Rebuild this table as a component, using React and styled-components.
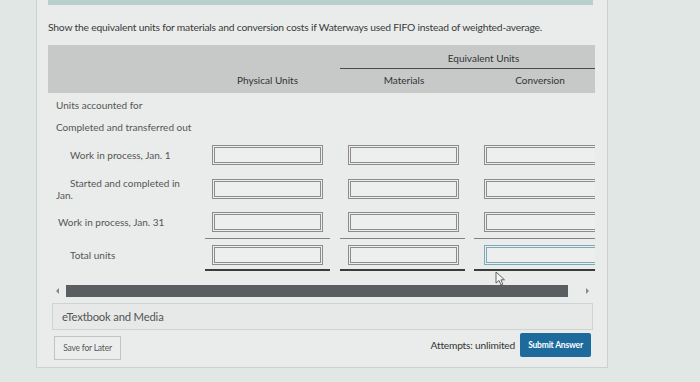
import React from "react";
import styled, { createGlobalStyle } from "styled-components";

const Global = createGlobalStyle`
  html, body { margin: 0; padding: 0; }
  body {
    background: #e1e7e4;
    font-family: Lato, "Open Sans", sans-serif;
    color: #444;
    width: 700px;
    height: 382px;
    overflow: hidden;
  }
`;

const Card = styled.div`
  margin-left: 36px;
  width: 572px;
  height: 368px;
  box-sizing: border-box;
  background: #e9ecea;
  border: 1px solid #cdd1cf;
  border-top: none;
  padding: 0 14px 0 11px;
  position: relative;
`;

const TopStrip = styled.div`
  height: 5px;
  background: #b9cfcb;
`;

const Prompt = styled.div`
  margin-top: 16px;
  font-size: 10.3px;
  color: #3a3a3a;
  letter-spacing: -0.2px;
  line-height: 12px;
`;

const Scroller = styled.div`
  margin-top: 12px;
  width: 547px;
  overflow: hidden;
`;

const Grid = styled.div`
  display: grid;
  grid-template-columns: 157px 135px 134px 140px;
  width: 566px;
`;

const HeadBand = styled.div`
  grid-column: 1 / -1;
  background: #c6c9c8;
  height: 48px;
  display: grid;
  grid-template-columns: 157px 135px 134px 140px;
  grid-template-rows: 24px 24px;
`;

const EqHead = styled.div`
  grid-column: 3 / 5;
  grid-row: 1;
  border-bottom: 1px solid #4a4a4a;
  margin-right: 19px;
  display: flex;
  align-items: center;
  justify-content: center;
  font-size: 10px;
  color: #333;
  padding-top: 3px;
  padding-left: 32px;
  box-sizing: border-box;
`;

const ColHead = styled.div`
  grid-column: ${(p) => p.col};
  grid-row: 2;
  display: flex;
  align-items: center;
  justify-content: center;
  font-size: 10px;
  color: #333;
  padding-right: ${(p) => p.pr || 0}px;
  padding-bottom: 2px;
`;

const Label = styled.div`
  grid-column: 1 / -1;
  font-size: 10px;
  color: #555;
  padding-left: 8px;
  height: ${(p) => p.h}px;
  display: flex;
  align-items: center;
`;

const RowLabel = styled.div`
  font-size: 10px;
  color: #555;
  padding-left: ${(p) => p.indent}px;
  display: flex;
  align-items: center;
  line-height: 12px;
  height: ${(p) => p.h}px;
`;

const TwoLine = styled.div`
  width: 128px;
  text-indent: 14px;
  margin-left: -14px;
`;

const Cell = styled.div`
  height: ${(p) => p.h}px;
  display: flex;
  align-items: center;
  padding-left: ${(p) => p.pl}px;
  box-sizing: border-box;
  position: relative;
`;

const Input = styled.div`
  flex: none;
  width: ${(p) => p.w}px;
  height: 20px;
  box-sizing: border-box;
  border: 3px double ${(p) => (p.focus ? "#7fa9b6" : "#8f8a8c")};
  background: #ecefed;
`;

const Rule = styled.div`
  width: 125px;
  height: ${(p) => p.thick}px;
  background: ${(p) => p.color};
`;

const RuleRow = styled.div`
  grid-column: 2 / -1;
  display: grid;
  grid-template-columns: 135px 134px 140px;
  height: ${(p) => p.h}px;
  padding-top: ${(p) => p.pt}px;
  box-sizing: border-box;
  align-items: start;
`;

const ScrollBar = styled.div`
  margin-top: 12px;
  margin-left: 4px;
  width: 540px;
  height: 14px;
  display: flex;
  align-items: center;
  gap: 5px;
`;

const Arrow = styled.div`
  width: 0;
  height: 0;
  border-top: 3px solid transparent;
  border-bottom: 3px solid transparent;
  ${(p) =>
    p.dir === "left"
      ? "border-right: 3px solid #888; margin-left: 4px;"
      : "border-left: 3px solid #888; margin-left: 13px;"}
`;

const Thumb = styled.div`
  width: 502px;
  height: 12px;
  background: #5b5e60;
  margin-left: 2px;
`;

const MediaBox = styled.div`
  margin-top: 5px;
  margin-left: 4px;
  width: 541px;
  height: 27px;
  box-sizing: border-box;
  border: 1px solid #cfd3d1;
  background: #e6e9e8;
  display: flex;
  align-items: center;
  padding-left: 9px;
  font-size: 11.3px;
  color: #555;
  letter-spacing: -0.2px;
`;

const Footer = styled.div`
  margin-top: 3px;
  margin-left: 6px;
  width: 537px;
  display: flex;
  align-items: flex-start;
  justify-content: space-between;
`;

const SaveBtn = styled.div`
  margin-top: 3px;
  width: 67px;
  height: 24px;
  box-sizing: border-box;
  border: 1px solid #bfc3c1;
  background: #eceeed;
  display: flex;
  align-items: center;
  justify-content: center;
  font-size: 8.5px;
  color: #555;
  letter-spacing: -0.2px;
`;

const Right = styled.div`
  display: flex;
  align-items: center;
  gap: 5px;
`;

const Attempts = styled.div`
  font-size: 10.2px;
  color: #333;
  letter-spacing: -0.2px;
`;

const Submit = styled.div`
  width: 71px;
  height: 24px;
  border-radius: 2px;
  background: #1d6a9c;
  color: #fff;
  font-size: 8.5px;
  font-weight: 700;
  letter-spacing: -0.2px;
  display: flex;
  align-items: center;
  justify-content: center;
`;

const Pointer = styled.svg`
  position: absolute;
  left: 458px;
  top: 271px;
`;

const cols = [
  { pl: 7, w: 111 },
  { pl: 8, w: 111 },
  { pl: 10, w: 125 },
];

function InputRow({ label, h, focusLast }) {
  return (
    <>
      {label}
      {cols.map((c, i) => (
        <Cell key={i} h={h} pl={c.pl}>
          <Input w={c.w} focus={focusLast && i === 2} />
        </Cell>
      ))}
    </>
  );
}

function Rules({ thick, color, h, pt }) {
  return (
    <RuleRow h={h} pt={pt}>
      <Rule thick={thick} color={color} />
      <Rule thick={thick} color={color} />
      <Rule thick={thick} color={color} />
    </RuleRow>
  );
}

export default function App() {
  return (
    <>
      <Global />
      <Card>
        <TopStrip />
        <Prompt>
          Show the equivalent units for materials and conversion costs if Waterways used FIFO instead of weighted-average.
        </Prompt>
        <Scroller>
          <Grid>
            <HeadBand>
              <EqHead>Equivalent Units</EqHead>
              <ColHead col={2} pr={10}>Physical Units</ColHead>
              <ColHead col={3} pr={6}>Materials</ColHead>
              <ColHead col={4} pr={8}>Conversion</ColHead>
            </HeadBand>
            <Label h={23}>Units accounted for</Label>
            <Label h={22}>Completed and transferred out</Label>
            <InputRow h={34} label={<RowLabel h={34} indent={22}>Work in process, Jan. 1</RowLabel>} />
            <InputRow
              h={33}
              label={
                <RowLabel h={33} indent={22}>
                  <TwoLine>Started and completed in Jan.</TwoLine>
                </RowLabel>
              }
            />
            <InputRow h={33} label={<RowLabel h={33} indent={10}>Work in process, Jan. 31</RowLabel>} />
            <Rules thick={1} color="#7e8483" h={6} pt={0} />
            <InputRow h={22} focusLast label={<RowLabel h={22} indent={22}>Total units</RowLabel>} />
            <Rules thick={2} color="#3a3d3d" h={6} pt={3} />
          </Grid>
        </Scroller>
        <ScrollBar>
          <Arrow dir="left" />
          <Thumb />
          <Arrow dir="right" />
        </ScrollBar>
        <MediaBox>eTextbook and Media</MediaBox>
        <Footer>
          <SaveBtn>Save for Later</SaveBtn>
          <Right>
            <Attempts>Attempts: unlimited</Attempts>
            <Submit>Submit Answer</Submit>
          </Right>
        </Footer>
        <Pointer width="12" height="16" viewBox="0 0 12 16">
          <path d="M1 1 L1 12 L4 9.5 L6 14 L7.8 13.2 L5.9 8.8 L9.5 8.8 Z" fill="#f4f6f5" stroke="#555" strokeWidth="0.9" strokeLinejoin="round" />
        </Pointer>
      </Card>
    </>
  );
}
